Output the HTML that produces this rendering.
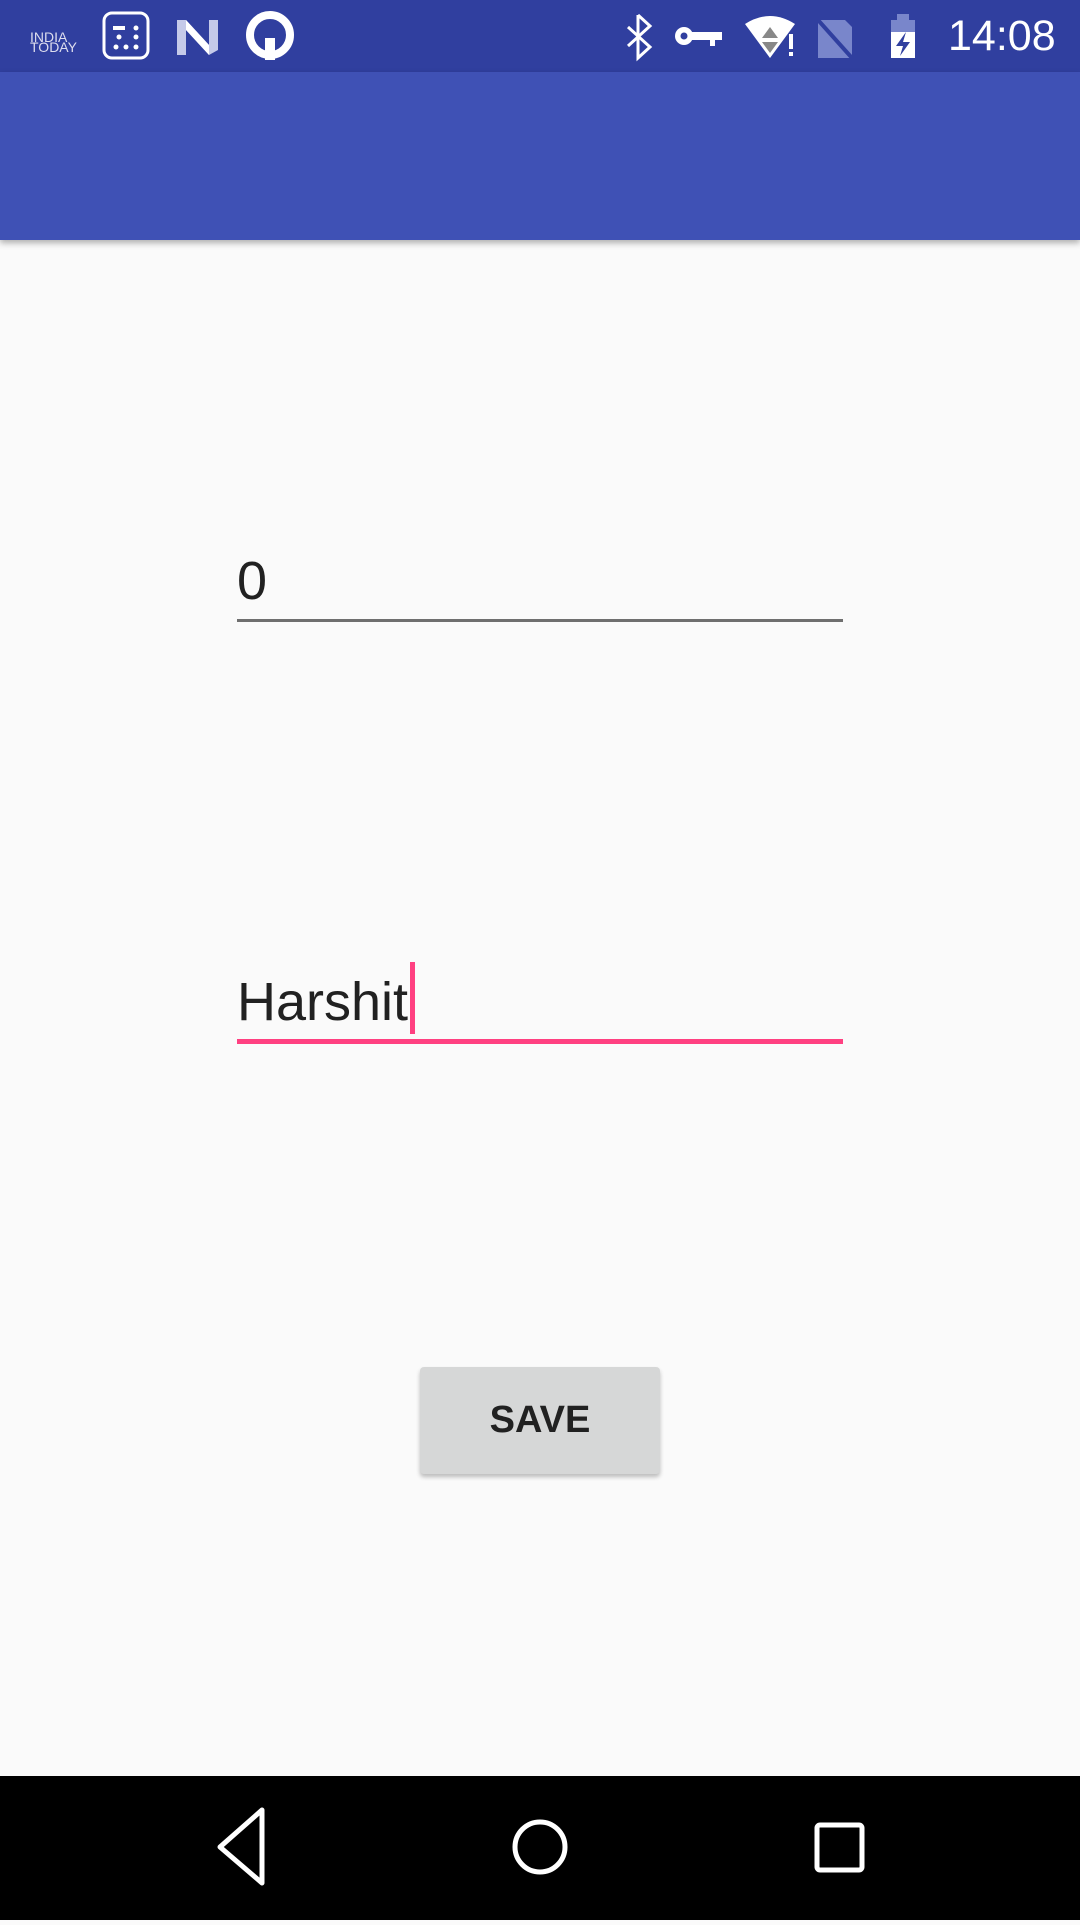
<!DOCTYPE html>
<html><head><meta charset="utf-8"><style>
*{margin:0;padding:0;box-sizing:border-box}
body{width:1080px;height:1920px;background:#fafafa;font-family:"Liberation Sans",sans-serif;position:relative;overflow:hidden}
.sb{position:absolute;left:0;top:0;width:1080px;height:72px;background:#303f9f}
.ab{position:absolute;left:0;top:72px;width:1080px;height:168px;background:#3f51b5;box-shadow:0 3px 6px rgba(0,0,0,.3)}
.time{position:absolute;left:948px;top:12px;color:#fff;font-size:43px}
.f{position:absolute;left:237px;width:606px}
.t{position:absolute;left:237px;font-size:54px;color:#212121}
.btn{position:absolute;left:420px;top:1367px;width:240px;height:107px;background:#d6d7d7;border-radius:4px;box-shadow:0 3px 4px rgba(0,0,0,.25);color:#212121;font-weight:bold;font-size:38px;text-align:center;line-height:107px}
.nb{position:absolute;left:0;top:1776px;width:1080px;height:144px;background:#000}
</style></head><body>
<div class="sb">
<svg width="1080" height="72" style="position:absolute;left:0;top:0">
<text x="30" y="42" fill="#dde" font-size="14" font-family="Liberation Sans">INDIA</text>
<text x="30" y="52" fill="#dde" font-size="14" font-family="Liberation Sans">TODAY</text>
<rect x="104" y="13" width="44" height="45" rx="8" fill="none" stroke="#fff" stroke-width="3"/>
<g fill="#fff"><rect x="113" y="26" width="12" height="4"/><circle cx="136" cy="28" r="2.5"/><circle cx="119" cy="37" r="2.5"/><circle cx="136" cy="37" r="2.5"/><circle cx="116" cy="47" r="2.5"/><circle cx="126" cy="47" r="2.5"/><circle cx="136" cy="47" r="2.5"/></g>
<path d="M177 20 L186 20 L209 45 L209 20 L218 20 L218 50 L209 55 L186 30 L186 55 L177 55Z" fill="#c5cae9"/>
<path d="M186 20 L209 45 L209 55 L186 30Z" fill="#fff"/>
<circle cx="270" cy="35" r="20" fill="none" stroke="#fff" stroke-width="8"/>
<rect x="265" y="38" width="10" height="22" fill="#fff"/>
<path d="M638 15 V58 L650 47 L628 27 M638 15 L650 26 L628 46" fill="none" stroke="#fff" stroke-width="3"/>
<circle cx="684" cy="36" r="9" fill="#fff"/><circle cx="684" cy="36" r="3.5" fill="#303f9f"/><rect x="690" y="32" width="32" height="8" fill="#fff"/><rect x="710" y="36" width="5" height="10" fill="#fff"/>
<path d="M745 24 Q770 8 795 24 L770 58Z" fill="#fff"/>
<path d="M770 27 L778 38 H762Z M770 53 L778 42 H762Z" fill="#888"/>
<rect x="789" y="34" width="4" height="15" fill="#fff"/><rect x="789" y="52" width="4" height="4" fill="#fff"/>
<path d="M818 20 H845 L852 27 V58 H818Z" fill="#7986cb"/>
<path d="M818 20 L852 58" stroke="#303f9f" stroke-width="4"/>
<rect x="891" y="20" width="24" height="38" fill="#fff"/><rect x="891" y="20" width="24" height="12" fill="#7986cb"/><rect x="897" y="14" width="12" height="6" fill="#7986cb"/>
<path d="M906 32 L896 46 H903 L900 56 L910 42 H903Z" fill="#303f9f"/>
</svg>
<div class="time">14:08</div>
</div>
<div class="ab"></div>
<div class="t" style="top:550px">0</div>
<div class="f" style="top:619px;height:3px;background:#6f6f6f"></div>
<div class="t" style="top:971px">Harshit</div>
<div style="position:absolute;left:410px;top:962px;width:5px;height:72px;background:#ff4081"></div>
<div class="f" style="top:1039px;height:5px;background:#ff4081"></div>
<div class="btn">SAVE</div>
<div class="nb">
<svg width="1080" height="144">
<path d="M262 1810 L220 1847 L262 1883Z" transform="translate(0,-1776)" fill="none" stroke="#fff" stroke-width="5" stroke-linejoin="round"/>
<circle cx="540" cy="71" r="25" fill="none" stroke="#fff" stroke-width="5"/>
<rect x="817" y="49" width="45" height="45" rx="3" fill="none" stroke="#fff" stroke-width="5"/>
</svg>
</div>
</body></html>
